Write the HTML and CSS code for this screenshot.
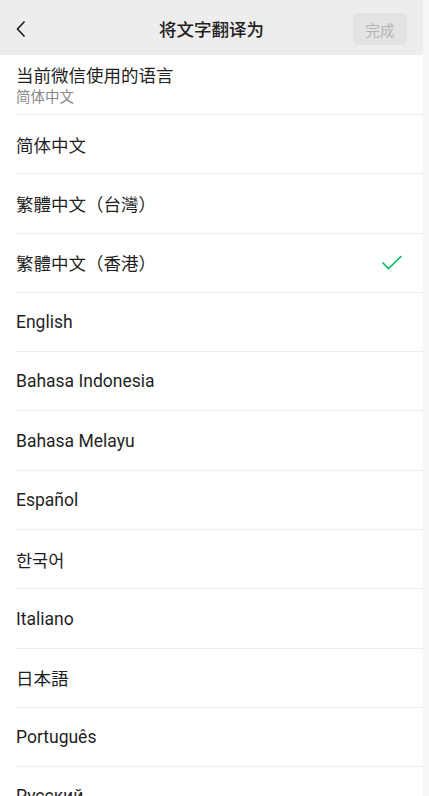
FILE: index.html
```html
<!DOCTYPE html>
<html lang="zh-CN">
<head>
<meta charset="utf-8">
<link rel="stylesheet" href="styles.css">
</head>
<body>
<div class="page">
  <header class="bar">
    <span class="back">
      <svg width="12" height="18" viewBox="0 0 12 18"><path d="M9.5 1.5 L2.5 9 L9.5 16.5" fill="none" stroke="#1a1a1a" stroke-width="1.6" stroke-linejoin="miter"/></svg>
    </span>
    <h1 class="title">将文字翻译为</h1>
    <span class="done">完成</span>
  </header>
  <ul class="list">
    <li class="row current">
      <div class="main">当前微信使用的语言</div>
      <div class="sub">简体中文</div>
    </li>
    <li class="row">简体中文</li>
    <li class="row"><span lang="zh-TW">繁體中文（台灣）</span></li>
    <li class="row"><span lang="zh-HK">繁體中文（香港）</span>
      <svg class="check" width="22" height="16" viewBox="0 0 22 16"><path d="M1.5 7.5 L7.5 13.5 L20.5 1" fill="none" stroke="#07c160" stroke-width="1.7"/></svg>
    </li>
    <li class="row">English</li>
    <li class="row">Bahasa Indonesia</li>
    <li class="row">Bahasa Melayu</li>
    <li class="row">Español</li>
    <li class="row"><span lang="ko">한국어</span></li>
    <li class="row">Italiano</li>
    <li class="row"><span lang="ja">日本語</span></li>
    <li class="row">Português</li>
    <li class="row">Русский</li>
  </ul>
</div>
</body>
</html>
```
FILE: styles.css
```css
html, body {
  margin: 0;
  padding: 0;
  height: 100%;
  overflow: hidden;
  background: #f6f6f6;
}
body {
  font-family: Roboto, "Noto Sans CJK SC", "Noto Sans CJK KR", "Noto Sans CJK JP", sans-serif;
  color: #1f1f1f;
}
.page {
  width: 423px;
  background: #fff;
  min-height: 100%;
}
.bar {
  height: 55px;
  background: #ededed;
  display: flex;
  align-items: center;
  position: relative;
  padding: 0 16px 0 15px;
  box-sizing: border-box;
}
.back {
  display: flex;
  align-items: center;
  margin-top: 2px;
}
.title {
  position: absolute;
  left: 0;
  right: 0;
  top: 0;
  height: 55px;
  line-height: 58px;
  margin: 0;
  text-align: center;
  font-size: 17.5px;
  font-weight: 500;
  pointer-events: none;
  font-family: "Noto Sans CJK SC", sans-serif;
}
.done {
  margin-left: auto;
  width: 54px;
  height: 32px;
  margin-top: 3px;
  border-radius: 5px;
  background: #e3e3e3;
  color: #b5b5b5;
  font-size: 14.5px;
  display: flex;
  align-items: center;
  justify-content: center;
  font-family: "Noto Sans CJK SC", sans-serif;
}
.list {
  list-style: none;
  margin: 0;
  padding: 0 0 0 16px;
}
.row {
  height: 59.3px;
  box-sizing: border-box;
  border-bottom: 1px solid #ededed;
  display: flex;
  align-items: center;
  font-size: 17.5px;
  padding-right: 20px;
}
.row.current {
  height: 60px;
  flex-direction: column;
  align-items: flex-start;
  justify-content: center;
  padding-top: 3px;
}
.current .main {
  font-size: 17.5px;
  line-height: 22px;
}
.current .sub {
  font-size: 14.5px;
  color: #888;
  line-height: 20px;
  margin-top: 1px;
}
.check {
  margin-left: auto;
}
[lang="zh-TW"] { font-family: "Noto Sans CJK TC", sans-serif; }
[lang="zh-HK"] { font-family: "Noto Sans CJK TC", sans-serif; }
[lang="ko"] { font-family: "Noto Sans CJK KR", sans-serif; }
[lang="ja"] { font-family: "Noto Sans CJK JP", sans-serif; }
```
